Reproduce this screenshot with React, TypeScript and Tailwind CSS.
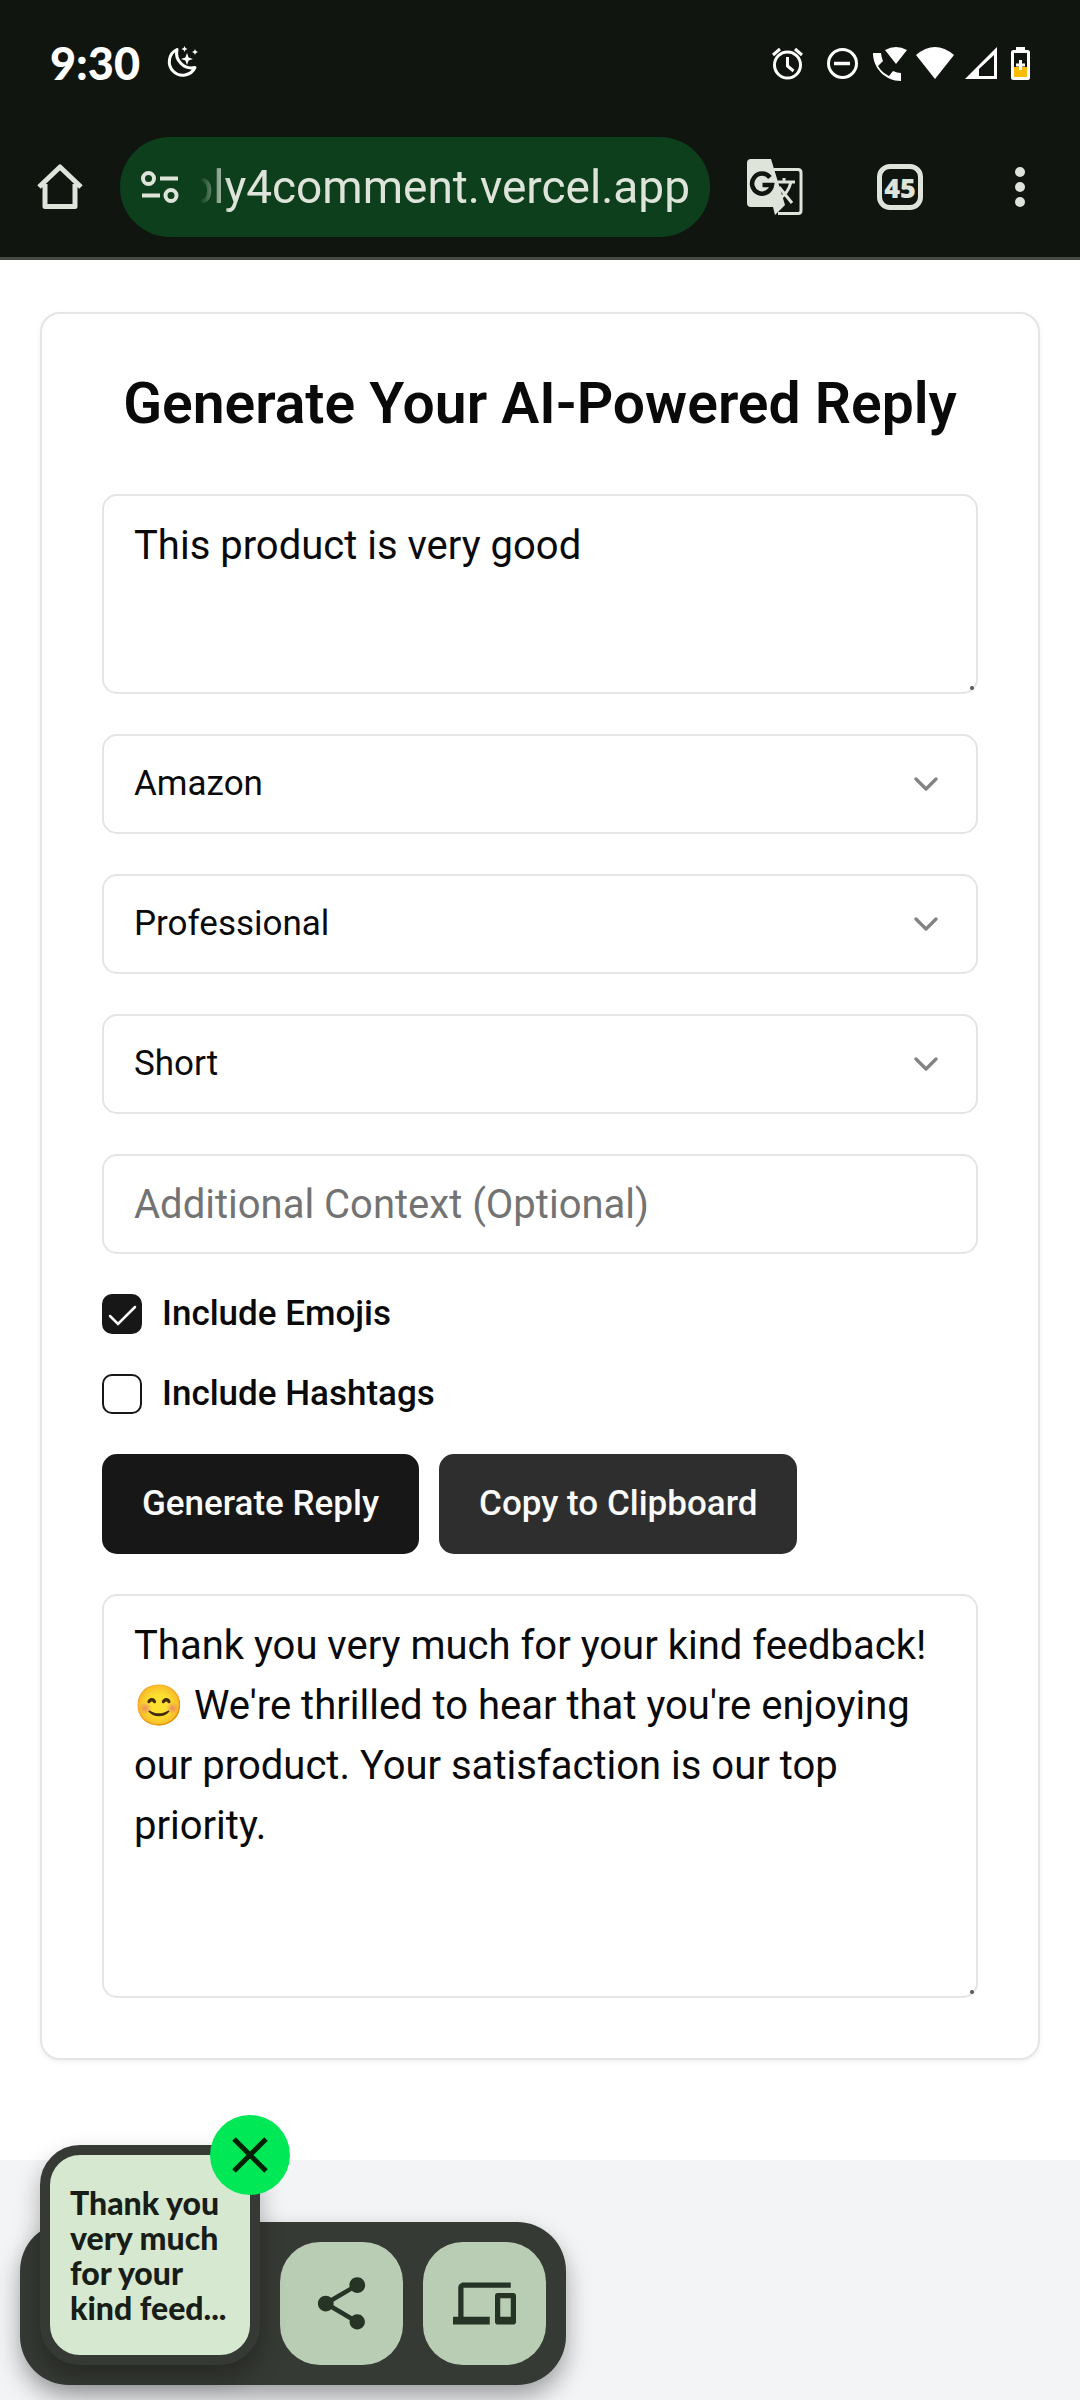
import { useState } from 'react';
import { ChevronDown } from 'lucide-react';
import { MdShare, MdDevices } from 'react-icons/md';

const field = 'w-full rounded-[15px] border-2 border-[#e5e5e5] bg-white px-[30px] text-[#0a0a0a]';

function StatusBar() {
  return (
    <div className="flex h-[126px] items-center justify-between pr-[49px] pl-[50px] text-white">
      <div className="flex items-center gap-[24px]">
        <time className="font-['Lato'] text-[45px] leading-[50px] font-black">9:30</time>
        <svg className="h-[36px] w-[36px]" viewBox="0 0 36 36" aria-hidden="true">
          <path d="M13 4.500A13.500 13.500 0 1 0 31 22.500A15 15 0 0 1 13 4.500Z" fill="none" stroke="currentColor" strokeWidth="3" strokeLinejoin="round" />
          <path d="M23 8l1.600 4.400L29 14l-4.400 1.600L23 20l-1.600-4.400L17 14l4.400-1.600zM20.500 1l.9 2.100L23.500 4l-2.100.9L20.500 7l-.9-2.100L17.500 4l2.100-.9zM31 4l.9 2.100L34 7l-2.100.9L31 10l-.9-2.100L28 7l2.100-.9z" fill="currentColor" />
        </svg>
      </div>
      <svg className="h-[36px] w-[260px]" viewBox="771 44 260 36" fill="none" stroke="white" strokeWidth="3" aria-label="Alarm, do not disturb, Wi-Fi calling, Wi-Fi, signal, battery charging">
        <circle cx="787.500" cy="64" r="13" />
        <path d="M787.500 56v9l6 5M773 54l7-6M802 54l-7-6" />
        <circle cx="842.500" cy="62.500" r="14" />
        <path d="M834 62.500h16" strokeWidth="3.500" />
        <path d="M873 52h8c.5 3 1 6 2 8l-5 5c3 5 7 8 11 10l4-5c3 1 5 2 8 2v8c-16 0-28-13-28-28zM885 49q11-6 22 0l-11 14z" fill="white" stroke="none" />
        <path d="M916 54q19-16 38 0l-19 24z" fill="white" stroke="none" />
        <path d="M965 78L997 46V78z M979 75H994V54L979 68z" fill="white" fillRule="evenodd" stroke="none" />
        <rect x="1012.500" y="50.500" width="16" height="27" rx="1" />
        <path d="M1016 46h9v4h-9z" fill="white" stroke="none" />
        <path d="M1014 66h13v10h-13z" fill="#fbbc04" stroke="none" />
        <path d="M1020.500 59v10M1016 64h9" />
      </svg>
    </div>
  );
}

function BrowserBar() {
  return (
    <div className="flex h-[131px] items-start pt-[11px] pr-[50px] pl-[36px] text-[#dfe4da]">
      <div className="flex h-[100px] w-full items-center">
        <button aria-label="Home" className="shrink-0">
          <svg className="h-[48px] w-[48px]" viewBox="0 0 48 48" fill="none" stroke="currentColor" strokeWidth="5" strokeLinejoin="round" aria-hidden="true">
            <path d="M3 24L24 4L45 24M9 21V43.500H39V21" />
          </svg>
        </button>
        <button className="ml-[36px] flex h-[100px] min-w-0 flex-1 items-center rounded-full bg-[#0e3f1c] pr-[20px] pl-[20px]">
          <svg className="h-[36px] w-[40px] shrink-0" viewBox="0 0 40 36" fill="none" stroke="currentColor" strokeWidth="4" aria-hidden="true">
            <circle cx="8.500" cy="9.500" r="5.500" />
            <path d="M20 9.500h18M2 26.500h18" />
            <circle cx="31" cy="26.500" r="5.500" />
          </svg>
          <span className="flex min-w-0 flex-1 justify-end [mask-image:linear-gradient(to_right,transparent_20px,black_50px)]">
            <span className="text-[46px] leading-[60px] whitespace-nowrap">ply4comment.vercel.app</span>
          </span>
        </button>
        <button aria-label="Translate page" className="ml-[36px] shrink-0">
          <svg className="h-[58px] w-[58px]" viewBox="746 158 58 58" aria-hidden="true">
            <path d="M774 169.500h24q3 0 3 3v38q0 3-3 3h-20" fill="none" stroke="currentColor" strokeWidth="3" />
            <path d="M751 159h20l14 46-10 10-2-8h-22q-4 0-4-4v-40q0-4 4-4z" fill="currentColor" />
            <path d="M770 177.500a10 10 0 1 0 2 7.500h-9.500" fill="none" stroke="#10150f" strokeWidth="4.500" />
            <path d="M775 182h20M784 178v4M791 182c-2 8-7 14-12 17M779 187l13 16" fill="none" stroke="currentColor" strokeWidth="3" />
          </svg>
        </button>
        <button aria-label="45 open tabs" className="ml-[73px] flex h-[46px] w-[46px] shrink-0 items-center justify-center rounded-[13px] border-5 border-current font-['Open_Sans'] text-[27px] leading-none font-extrabold">
          45
        </button>
        <button aria-label="More options" className="ml-[87px] flex w-[20px] shrink-0 flex-col items-center gap-[5px]">
          <span className="h-[10px] w-[10px] rounded-full bg-current" />
          <span className="h-[10px] w-[10px] rounded-full bg-current" />
          <span className="h-[10px] w-[10px] rounded-full bg-current" />
        </button>
      </div>
    </div>
  );
}

function SelectField({ label, options }: { label: string; options: string[] }) {
  return (
    <div className="relative">
      <select aria-label={label} defaultValue={options[0]} className={field + ' block h-[100px] appearance-none text-[35px] leading-[50px]'}>
        {options.map((o) => (
          <option key={o}>{o}</option>
        ))}
      </select>
      <ChevronDown className="pointer-events-none absolute top-[30px] right-[32px] h-[40px] w-[40px] text-[#0a0a0a] opacity-50" aria-hidden="true" />
    </div>
  );
}

function TextArea({ label, value, size }: { label: string; value: string; size: string }) {
  return (
    <div className="relative">
      <textarea aria-label={label} defaultValue={value} className={field + ' block resize-none overflow-hidden py-[20px] text-[40px] leading-[60px] ' + size} />
      <span className="absolute right-[4px] bottom-[4px] h-[4px] w-[4px] rounded-full bg-[#555]" />
    </div>
  );
}

function CheckField({ id, label, initial }: { id: string; label: string; initial: boolean }) {
  const [on, setOn] = useState(initial);
  return (
    <div className="flex h-[40px] items-center gap-[20px]">
      <span className="relative h-[40px] w-[40px]">
        <input id={id} type="checkbox" checked={on} onChange={(e) => setOn(e.target.checked)} className="block h-[40px] w-[40px] appearance-none rounded-[10px] border-2 border-[#171717] checked:bg-[#171717]" />
        {on && (
          <svg className="pointer-events-none absolute inset-0" viewBox="0 0 40 40" fill="none" stroke="#fafafa" strokeWidth="2.500" strokeLinecap="round" aria-hidden="true">
            <path d="M8 22l8 8L33 13" />
          </svg>
        )}
      </span>
      <label htmlFor={id} className="text-[35px] leading-[40px] font-medium">{label}</label>
    </div>
  );
}

function ClipboardOverlay() {
  return (
    <aside className="absolute bottom-[15px] left-[20px] flex h-[163px] items-center gap-[20px] rounded-[49px] bg-[#363a34] pr-[20px] pl-[260px] shadow-[0_12px_24px_rgba(0,0,0,0.35)]">
      <div className="absolute bottom-[20px] left-[20px] flex h-[220px] w-[220px] items-center rounded-[40px] border-10 border-[#363a34] bg-[#d6e8d0] pl-[20px] shadow-[0_12px_24px_rgba(0,0,0,0.3)]">
        <p className="font-['Lato'] text-[32px] leading-[35px] font-black whitespace-nowrap text-[#181d17]">
          Thank you<br />very much<br />for your<br />kind feed...
        </p>
      </div>
      <button aria-label="Dismiss" className="absolute -top-[107px] left-[190px] flex h-[80px] w-[80px] items-center justify-center rounded-full bg-[#00e855]">
        <svg className="h-[36px] w-[36px]" viewBox="0 0 36 36" stroke="#002106" strokeWidth="5" aria-hidden="true">
          <path d="M2 2l32 32M34 2L2 34" />
        </svg>
      </button>
      <button aria-label="Share" className="flex h-[123px] w-[123px] items-center justify-center rounded-[40px] bg-[#b9ccb4] text-[#253425]">
        <MdShare size={63} />
      </button>
      <button aria-label="Send to nearby device" className="flex h-[123px] w-[123px] items-center justify-center rounded-[40px] bg-[#b9ccb4] text-[#253425]">
        <MdDevices size={63} />
      </button>
    </aside>
  );
}

export default function App() {
  return (
    <div className="relative overflow-hidden bg-white font-['Roboto',sans-serif] text-[#0a0a0a]">
      <header className="border-b-3 border-[#444a40] bg-[#10150f]">
        <StatusBar />
        <BrowserBar />
      </header>
      <main className="px-[40px] pt-[52px] pb-[100px]">
        <section className="rounded-[20px] border-2 border-[#e5e5e5] p-[60px] shadow-[0_2px_5px_rgba(0,0,0,0.06)]">
          <h1 className="text-center text-[57px] leading-[60px] font-semibold">Generate Your AI-Powered Reply</h1>
          <form className="mt-[60px] flex flex-col gap-[40px]" onSubmit={(e) => e.preventDefault()}>
            <TextArea label="Comment" value="This product is very good" size="h-[200px]" />
            <SelectField label="Platform" options={['Amazon', 'Google', 'YouTube']} />
            <SelectField label="Tone" options={['Professional', 'Friendly', 'Casual']} />
            <SelectField label="Length" options={['Short', 'Medium', 'Long']} />
            <input aria-label="Additional context" placeholder="Additional Context (Optional)" className={field + ' h-[100px] text-[40px] leading-[60px] placeholder:text-[#737373]'} />
            <CheckField id="emojis" label="Include Emojis" initial={true} />
            <CheckField id="hashtags" label="Include Hashtags" initial={false} />
            <div className="flex gap-[20px] text-[35px] leading-[50px] font-medium text-[#fafafa]">
              <button className="h-[100px] rounded-[15px] bg-[#171717] px-[40px]">Generate Reply</button>
              <button type="button" className="h-[100px] rounded-[15px] bg-[#2e2e2e] px-[40px]">Copy to Clipboard</button>
            </div>
            <TextArea label="Generated reply" value="Thank you very much for your kind feedback! 😊 We're thrilled to hear that you're enjoying our product. Your satisfaction is our top priority." size="h-[404px]" />
          </form>
        </section>
      </main>
      <footer className="h-[240px] bg-[#f3f4f6]" />
      <ClipboardOverlay />
    </div>
  );
}
